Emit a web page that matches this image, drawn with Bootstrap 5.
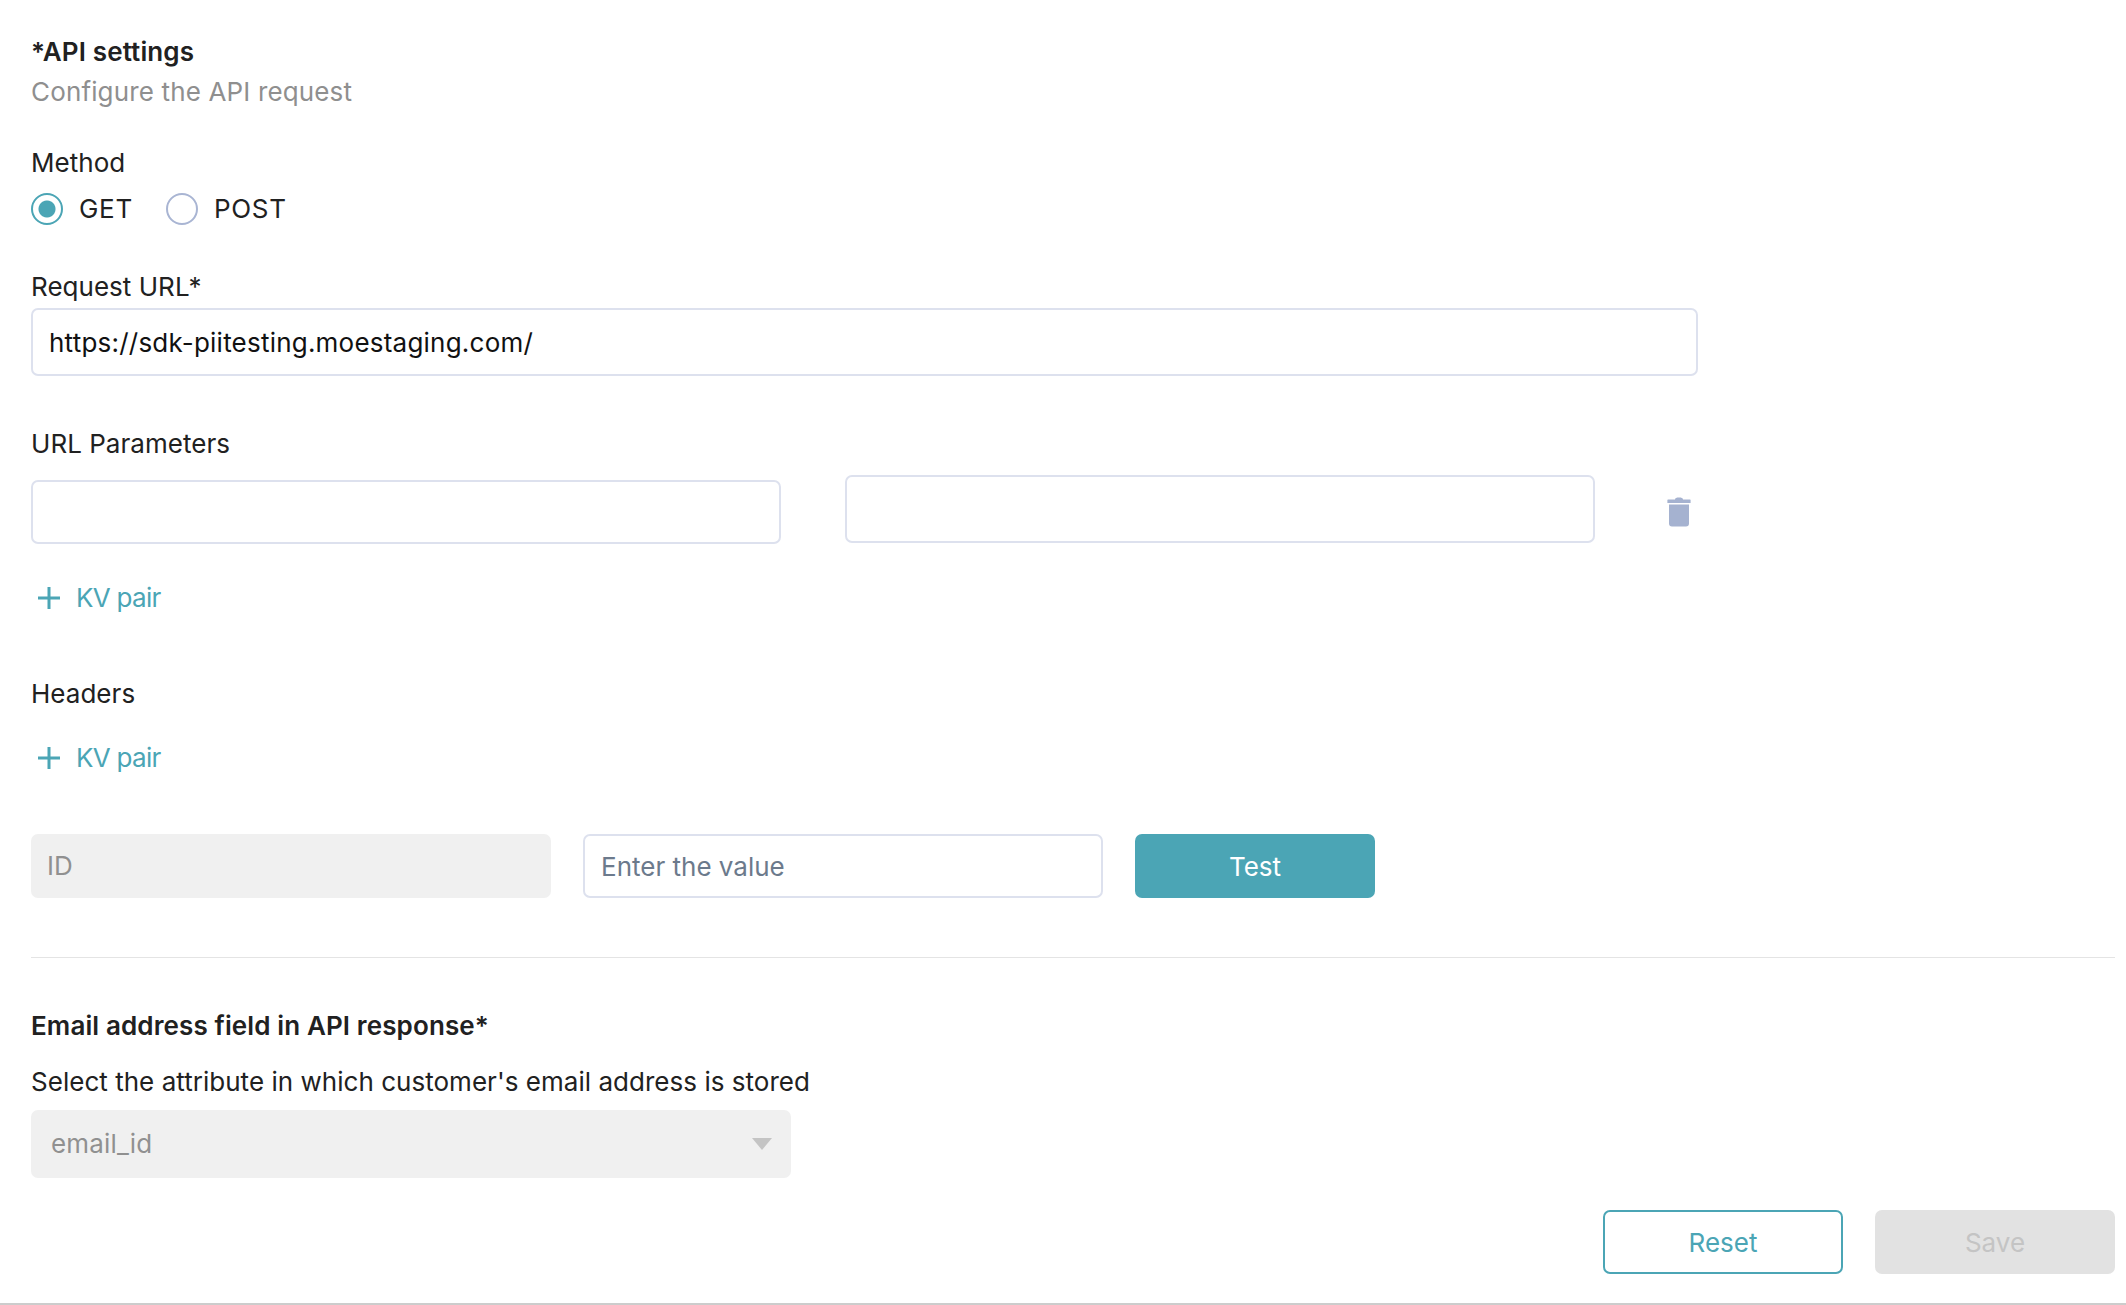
<!doctype html>
<html lang="en"><head><meta charset="utf-8"><title>API settings</title>
<link href="https://cdn.jsdelivr.net/npm/bootstrap@5.3.0/dist/css/bootstrap.min.css" rel="stylesheet">
<style>
html,body{height:1305px;overflow:hidden}
body{font-family:"Inter","Liberation Sans",sans-serif;font-size:26px;line-height:32px;color:#212121;background:#fff;border-bottom:2px solid #ccc}
.page-wrap{padding:36px 11px 0 31px}
.ttl{font-weight:600;margin:0;letter-spacing:.12px}
.sub{color:#8f8f8f;margin:8px 0 0;letter-spacing:.15px}
.fld{line-height:32px;margin:0;letter-spacing:.03px}
.rad{width:32px;height:32px;border-radius:50%;border:2px solid #a9b5d3;background:#fff;flex:none}
.rad.on{border-color:#4ba5b5;background:radial-gradient(circle,#4ba5b5 0 8px,#fff 9px)}
.rlb{margin-left:16px;letter-spacing:.7px}
.tbox{display:block;border:2px solid #dde1ee;border-radius:7px;background:#fff;padding:0 16px;color:#111;font-size:26px;outline:0;width:100%;height:100%}
.tbox.url{letter-spacing:.22px}
.tbox::placeholder{color:#6c7a8c}
.req{width:1667px;height:68px}
.kv-a{width:750px;height:64px}
.kv-b{width:750px;height:68px;margin-top:-5px}
.kvl{color:#4ba5b5;gap:16px;padding-left:7px;letter-spacing:-.7px}
.gbox{background:#f0f0f0;border-radius:7px;color:#909090;display:flex;align-items:center}
.idb{width:520px;height:64px;padding:0 16px}
.valb{width:520px;height:64px}
.act{height:64px;width:240px;border-radius:7px;font-size:26px;display:flex;align-items:center;justify-content:center;padding-top:2px}
.act-fill{background:#4ba5b5;color:#fff}
.act-line{border:2px solid #4ba5b5;color:#4ba5b5;background:#fff}
.act-off{background:#e2e2e2;color:#c4c4c4}
.rule{height:1px;background:#e4e4e4;margin:0}
.selb{width:760px;height:68px;padding:0 19px 0 20px;justify-content:space-between}
.selb span{letter-spacing:.15px}
</style></head><body>
<div class="page-wrap">
<p class="ttl">*API settings</p>
<p class="sub">Configure the API request</p>
<p class="fld" style="margin-top:39px">Method</p>
<div class="d-flex align-items-center" style="margin-top:14px">
 <span class="rad on"></span><span class="rlb">GET</span>
 <span class="rad" style="margin-left:33px"></span><span class="rlb">POST</span>
</div>
<p class="fld" style="margin-top:46px">Request URL*</p>
<div class="req" style="margin-top:5px"><input class="tbox url" value="https://sdk-piitesting.moestaging.com/" aria-label="Request URL"></div>
<p class="fld" style="margin-top:52px">URL Parameters</p>
<div class="d-flex align-items-start" style="margin-top:20px">
 <div class="kv-a"><input class="tbox" aria-label="Key"></div>
 <div class="kv-b" style="margin-left:64px"><input class="tbox" aria-label="Value"></div>
 <svg style="margin:17px 0 0 72px" width="24" height="30" viewBox="0 0 24 30" aria-hidden="true"><path fill="#a5b2d0" d="M8 2.5C8 1 9.500 .5 12 .5s4 .5 4 2h7a.6 .6 0 0 1 .6 .6V6H.4V3.100A.6 .6 0 0 1 1 2.500zM2 7.500h20V26.500a3 3 0 0 1-3 3H5a3 3 0 0 1-3-3z"/></svg>
</div>
<div class="kvl d-flex align-items-center" style="margin-top:38px"><svg width="22" height="22" viewBox="0 0 22 22" aria-hidden="true"><path stroke="#4ba5b5" stroke-width="3" d="M11 0v22M0 11h22"/></svg><span>KV pair</span></div>
<p class="fld" style="margin-top:64px">Headers</p>
<div class="kvl d-flex align-items-center" style="margin-top:32px"><svg width="22" height="22" viewBox="0 0 22 22" aria-hidden="true"><path stroke="#4ba5b5" stroke-width="3" d="M11 0v22M0 11h22"/></svg><span>KV pair</span></div>
<div class="d-flex" style="gap:32px;margin-top:60px">
 <div class="gbox idb">ID</div>
 <div class="valb"><input class="tbox" placeholder="Enter the value" aria-label="Value"></div>
 <div class="act act-fill">Test</div>
</div>
<div class="rule" style="margin-top:59px"></div>
<p class="ttl" style="margin-top:52px">Email address field in API response*</p>
<p class="fld" style="margin-top:24px">Select the attribute in which customer's email address is stored</p>
<div class="gbox selb" style="margin-top:12px"><span>email_id</span><svg width="20" height="12" viewBox="0 0 20 12" aria-hidden="true"><path fill="#c4c4c4" d="M0 0h20L10 12z"/></svg></div>
<div class="d-flex justify-content-end" style="gap:32px;margin-top:32px">
 <div class="act act-line">Reset</div>
 <div class="act act-off">Save</div>
</div>
</div>
<script src="https://cdn.jsdelivr.net/npm/bootstrap@5.3.0/dist/js/bootstrap.bundle.min.js"></script>
</body></html>
